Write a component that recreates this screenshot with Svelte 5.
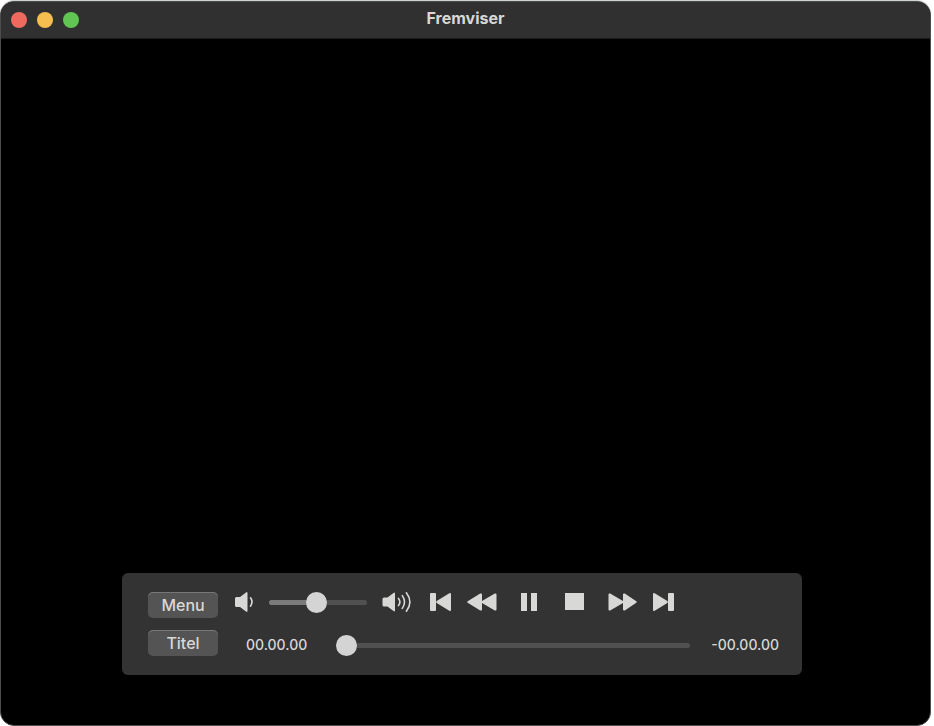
<script>
	let volume = $state(48);
	let position = $state(0);
	let playing = $state(true);

	const transport = [
		{ label: "Forrige", width: 22, path: "M1 2h4q1 0 1 1v16q0 1-1 1H1q-1 0-1-1V3q0-1 1-1zM6.3 10.2L19.3 2.2Q21 1.5 21 3.2v15.6q0 1.7-1.7 1L6.3 11.8z" },
		{ label: "Spol tilbage", width: 32, path: "M.7 10.2L13.2 2.6Q15 2 15 3.6V10L27.8 2.6Q29.5 2 29.5 3.6v14.8q0 1.6-1.7 1L15 12v6.4q0 1.6-1.8 1L.7 11.8q-1.1-.8 0-1.6z" },
		{ label: "Pause", width: 32, path: "M7 2h6v18H7zM17 2h6v18h-6z" },
		{ label: "Stop", width: 32, path: "M4 2h19v17H4z" },
		{ label: "Spol frem", width: 30, path: "M28.3 10.2L16.8 2.6Q15 2 15 3.6V10L2.2 2.6Q.5 2 .5 3.6v14.8q0 1.6 1.7 1L15 12v6.4q0 1.6 1.8 1l11.5-7.6q1.1-.8 0-1.6z" },
		{ label: "Næste", width: 22, path: "M16 2h4q1 0 1 1v16q0 1-1 1h-4q-1 0-1-1V3q0-1 1-1zM14.7 10.2L1.7 2.2Q0 1.5 0 3.2v15.6q0 1.7 1.7 1l13-8z" }
	];
</script>

<main class="window">
	<header class="titlebar">
		<div class="lights">
			<button class="light close" aria-label="Luk"></button>
			<button class="light minimize" aria-label="Minimer"></button>
			<button class="light zoom" aria-label="Zoom"></button>
		</div>
		<h1>Fremviser</h1>
	</header>

	<section class="screen">
		<div class="controller">
			<div class="menus">
				<button class="push">Menu</button>
				<button class="push">Titel</button>
			</div>

			<div class="rows">
				<div class="row">
					<button class="icon" aria-label="Lydstyrke ned" onclick={() => (volume = 0)}>
						<svg width="19" height="22" viewBox="0 0 19 22">
							<path d="M1.5 6H5l6-4.6q1.5-1 1.5.8v17.6q0 1.8-1.5.8L5 16H1.5Q0 16 0 14.5v-7Q0 6 1.5 6z" fill="currentColor" />
							<path d="M15.5 6.8q3 4.2 0 8.4" fill="none" stroke="currentColor" stroke-width="1.6" stroke-linecap="round" />
						</svg>
					</button>
					<input
						class="slider volume"
						type="range"
						min="0"
						max="100"
						aria-label="Lydstyrke"
						bind:value={volume}
						style="--fill: {volume}%"
					/>
					<button class="icon" aria-label="Lydstyrke op" onclick={() => (volume = 100)}>
						<svg width="30" height="22" viewBox="0 0 30 22">
							<path d="M2 6.5h3.5l6-4.6q1.5-1 1.5.8v16.6q0 1.8-1.5.8l-6-4.6H2Q.5 15.500.5 14V8Q.5 6.500 2 6.500z" fill="currentColor" />
							<path d="M16.5 7.4q2.8 3.6 0 7.2M20.3 4.6q4.4 6.4 0 12.8M24.4 1.8q7 9.2 0 18.4" fill="none" stroke="currentColor" stroke-width="1.6" stroke-linecap="round" />
						</svg>
					</button>
					<div class="transport">
						{#each transport as { label, width, path }}
							<button class="icon" aria-label={label} onclick={() => (playing = !playing)}>
								<svg {width} height="22" viewBox="0 0 {width} 22">
									<path d={path} fill="currentColor" />
								</svg>
							</button>
						{/each}
					</div>
				</div>

				<div class="row timeline">
					<span class="time">00.00.00</span>
					<input
						class="slider scrubber"
						type="range"
						min="0"
						max="100"
						aria-label="Position"
						bind:value={position}
						style="--fill: {position}%"
					/>
					<span class="time">-00.00.00</span>
				</div>
			</div>
		</div>
	</section>
</main>

<style>
	:global(body) {
		background: #fff;
	}

	.window {
		box-sizing: border-box;
		display: flex;
		flex-direction: column;
		min-height: calc(100vh - 1px);
		margin: 1px 3px 0 0;
		border: 1px solid #4c4c4c;
		border-radius: 14px;
		background: #000;
		box-shadow: 0 -1px 0 #ccd2d0;
		color: #d8d8d6;
		font-family: Inter, "Liberation Sans", sans-serif;
		overflow: hidden;
	}

	.titlebar {
		display: grid;
		grid-template-columns: 1fr auto 1fr;
		align-items: center;
		height: 36px;
		padding: 0 10px;
		background: #303030;
		border-bottom: 1px solid #1c1c1c;
	}

	.lights {
		display: flex;
		gap: 10px;
	}

	.light {
		width: 16px;
		height: 16px;
		padding: 0;
		border: 0;
		border-radius: 50%;
	}

	.close {
		background: #ee6a5f;
	}

	.minimize {
		background: #f5bf4f;
	}

	.zoom {
		background: #61c554;
	}

	h1 {
		margin: 0;
		padding-bottom: 4px;
		font-size: 16px;
		line-height: 20px;
		font-weight: 700;
	}

	.screen {
		flex: 1;
		display: flex;
		align-items: flex-end;
		padding: 0 128px 50px 121px;
	}

	.controller {
		box-sizing: border-box;
		flex: 1;
		display: flex;
		align-items: flex-end;
		gap: 17px;
		padding: 18px 23px 19px 26px;
		border-radius: 6px;
		background: #333;
	}

	.menus {
		display: flex;
		flex-direction: column;
		gap: 12px;
	}

	.push {
		width: 70px;
		height: 26px;
		padding: 0;
		border: 0;
		border-radius: 5px;
		background: #545454;
		box-shadow: inset 0 1px 0 #777;
		color: inherit;
		font: 500 16px/24px Inter, "Liberation Sans", sans-serif;
	}

	.rows {
		flex: 1;
		display: flex;
		flex-direction: column;
		gap: 21px;
	}

	.row {
		display: flex;
		align-items: center;
		height: 22px;
		gap: 15px;
	}

	.icon {
		display: block;
		padding: 0;
		border: 0;
		background: none;
		color: inherit;
	}

	.icon svg {
		display: block;
	}

	.transport {
		display: flex;
		gap: 15px;
		margin-left: 3px;
	}

	.timeline {
		gap: 21px;
		padding-left: 11px;
	}

	.time {
		font-size: 14px;
		line-height: 22px;
		font-weight: 500;
		white-space: nowrap;
	}

	.slider {
		appearance: none;
		height: 22px;
		margin: 0;
		background: none;
	}

	.volume {
		width: 98px;
	}

	.scrubber {
		flex: 1;
		min-width: 0;
		margin-left: 8px;
	}

	.slider::-webkit-slider-runnable-track {
		height: 5px;
		border-radius: 3px;
		background: linear-gradient(to right, #7b7b7b var(--fill), #515151 var(--fill));
	}

	.slider::-webkit-slider-thumb {
		appearance: none;
		width: 21px;
		height: 21px;
		margin-top: -8px;
		border-radius: 50%;
		background: #d4d4d4;
	}
</style>
